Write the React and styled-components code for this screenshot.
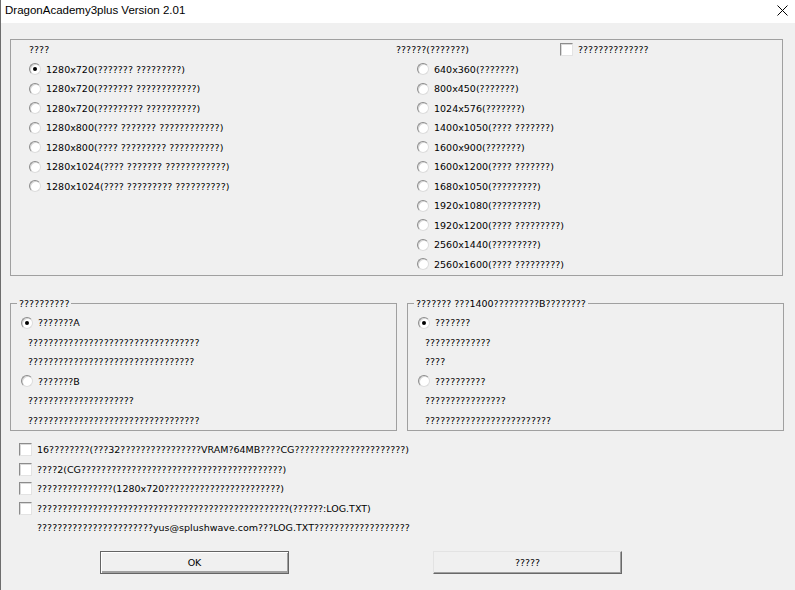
import React from 'react';
import styled, { createGlobalStyle } from 'styled-components';

const GlobalStyle = createGlobalStyle`
  html, body {
    margin: 0;
    padding: 0;
    background: #f0f0f0;
  }
  * { box-sizing: border-box; }
`;

const Window = styled.div`
  width: 795px;
  height: 590px;
  background: #f0f0f0;
  border-left: 1px solid #6d6d6d;
  font-family: "DejaVu Sans", sans-serif;
  font-size: 9.5px;
  color: #000;
  overflow: hidden;
`;

const TitleBar = styled.div`
  height: 23px;
  background: #fff;
  display: flex;
  align-items: center;
  padding-left: 4px;
`;

const Title = styled.span`
  font-family: "Liberation Sans", Arial, sans-serif;
  font-size: 11.5px;
  margin-top: -3px;
`;

const CloseBtn = styled.div`
  margin-left: auto;
  margin-right: 7px;
  margin-top: -2px;
  display: flex;
`;

const Content = styled.div`
  padding-left: 9px;
`;

const TopGroup = styled.div`
  margin-top: 16px;
  width: 773px;
  height: 237px;
  border: 1px solid #a0a0a0;
  display: grid;
  grid-template-columns: 367px 1fr;
  padding-left: 18px;
`;

const Column = styled.div`
  display: flex;
  flex-direction: column;
`;

const Row = styled.div`
  height: 19.5px;
  display: flex;
  align-items: center;
  white-space: nowrap;
  padding-left: ${p => p.$indent || 0}px;
  gap: ${p => p.$gap ?? 5}px;
`;

const HeaderLabel = styled.span`
  width: ${p => p.$w}px;
`;

const Circle = styled.span`
  width: 12px;
  height: 12px;
  flex: none;
  border-radius: 50%;
  background: #fff;
  border: 1px solid;
  border-color: #8c8c8c #dcdcdc #dcdcdc #8c8c8c;
  box-shadow: inset 1px 1px 0 #d6d6d6;
  display: flex;
  align-items: center;
  justify-content: center;
  &::after {
    content: '';
    width: 4px;
    height: 4px;
    border-radius: 50%;
    background: ${p => (p.$on ? '#000' : 'transparent')};
  }
`;

const Box = styled.span`
  width: 13px;
  height: 13px;
  flex: none;
  background: #fff;
  border: 1px solid;
  border-color: #8c8c8c #e3e3e3 #e3e3e3 #8c8c8c;
  box-shadow: inset 1px 1px 0 #dadada;
`;

const MidRow = styled.div`
  display: flex;
  gap: 10px;
  margin-top: 17.5px;
`;

const Group = styled.fieldset`
  margin: 0;
  min-width: 0;
  width: ${p => p.$w}px;
  border: 1px solid #a0a0a0;
  padding: 0 0 0 10px;
`;

const Legend = styled.legend`
  margin-left: -4px;
  padding: 0 2px;
  line-height: 19.5px;
  white-space: nowrap;
`;

const Note = styled.div`
  height: 19.5px;
  line-height: 19.5px;
  padding-left: 7px;
  white-space: nowrap;
`;

const Checks = styled.div`
  margin-top: 8.75px;
  padding-left: 9px;
`;

const Buttons = styled.div`
  display: flex;
  gap: 144px;
  margin-top: 13.25px;
  padding-left: 90px;
`;

const Button = styled.div`
  width: 189px;
  height: 23px;
  display: flex;
  align-items: center;
  justify-content: center;
  background: #f0f0f0;
  border: 1px solid;
  border-color: ${p => (p.$default ? '#646464' : '#e3e3e3 #696969 #696969 #e3e3e3')};
  box-shadow: ${p =>
    p.$default
      ? 'inset 1px 1px 0 #fff, inset -1px -2px 0 #a0a0a0'
      : 'inset -1px -1px 0 #a0a0a0'};
`;

const left = [
  '1280x720(??????? ?????????)',
  '1280x720(??????? ????????????)',
  '1280x720(????????? ??????????)',
  '1280x800(???? ??????? ????????????)',
  '1280x800(???? ????????? ??????????)',
  '1280x1024(???? ??????? ????????????)',
  '1280x1024(???? ????????? ??????????)',
];

const right = [
  '640x360(???????)',
  '800x450(???????)',
  '1024x576(???????)',
  '1400x1050(???? ???????)',
  '1600x900(???????)',
  '1600x1200(???? ???????)',
  '1680x1050(?????????)',
  '1920x1080(?????????)',
  '1920x1200(???? ?????????)',
  '2560x1440(?????????)',
  '2560x1600(???? ?????????)',
];

const checks = [
  '16????????(???32????????????????VRAM?64MB????CG??????????????????????)',
  '????2(CG????????????????????????????????????????)',
  '???????????????(1280x720???????????????????????)',
  '??????????????????????????????????????????????????(??????:LOG.TXT)',
];

function Radio({ on, children }) {
  return (
    <Row>
      <Circle $on={on} />
      <span>{children}</span>
    </Row>
  );
}

export default function App() {
  return (
    <>
      <GlobalStyle />
      <Window>
        <TitleBar>
          <Title>DragonAcademy3plus Version 2.01</Title>
          <CloseBtn>
            <svg width="11" height="11" viewBox="0 0 11 11">
              <path d="M0.5 0.5 L10.5 10.5 M10.5 0.5 L0.5 10.5" stroke="#000" strokeWidth="1" />
            </svg>
          </CloseBtn>
        </TitleBar>
        <Content>
          <TopGroup>
            <Column>
              <Row>????</Row>
              {left.map((t, i) => (
                <Radio key={t + i} on={i === 0}>{t}</Radio>
              ))}
            </Column>
            <Column>
              <Row $gap={0}>
                <HeaderLabel $w={164}>??????(???????)</HeaderLabel>
                <Box />
                <span style={{ marginLeft: 5 }}>??????????????</span>
              </Row>
              <Column style={{ paddingLeft: 21 }}>
                {right.map(t => (
                  <Radio key={t}>{t}</Radio>
                ))}
              </Column>
            </Column>
          </TopGroup>

          <MidRow>
            <Group $w={387}>
              <Legend>??????????</Legend>
              <Radio on>???????A</Radio>
              <Note>??????????????????????????????????</Note>
              <Note>?????????????????????????????????</Note>
              <Radio>???????B</Radio>
              <Note>?????????????????????</Note>
              <Note>??????????????????????????????????</Note>
            </Group>
            <Group $w={377}>
              <Legend>??????? ???1400?????????B????????</Legend>
              <Radio on>???????</Radio>
              <Note>?????????????</Note>
              <Note>????</Note>
              <Radio>??????????</Radio>
              <Note>????????????????</Note>
              <Note>?????????????????????????</Note>
            </Group>
          </MidRow>

          <Checks>
            {checks.map(t => (
              <Row key={t}>
                <Box />
                <span>{t}</span>
              </Row>
            ))}
            <Row $indent={18}>???????????????????????yus@splushwave.com???LOG.TXT???????????????????</Row>
          </Checks>

          <Buttons>
            <Button $default>OK</Button>
            <Button>?????</Button>
          </Buttons>
        </Content>
      </Window>
    </>
  );
}
